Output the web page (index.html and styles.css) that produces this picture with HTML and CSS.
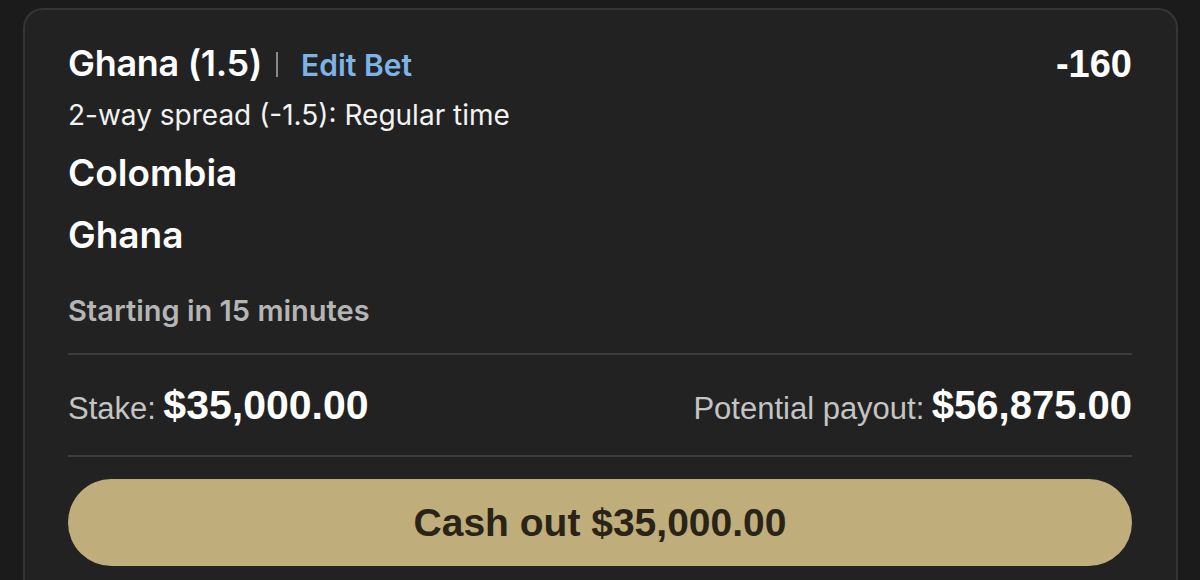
FILE: index.html
```html
<!DOCTYPE html>
<html lang="en">
  <head>
    <meta charset="UTF-8" />
    <title>Bet slip</title>
    <link rel="stylesheet" href="styles.css">
  </head>
  <body>
    <main class="card">
      <div class="bet-head">
        <div class="bet-title">
          <span class="pick">Ghana (1.5)</span>
          <span class="sep"></span>
          <a class="edit" href="#">Edit Bet</a>
        </div>
        <span class="odds">-160</span>
      </div>
      <p class="market">2-way spread (-1.5): Regular time</p>
      <p class="team">Colombia</p>
      <p class="team">Ghana</p>
      <p class="start">Starting in 15 minutes</p>
      <div class="totals">
        <p class="stake"><span class="label">Stake:</span> <span class="amount">$35,000.00</span></p>
        <p class="payout"><span class="label">Potential payout:</span> <span class="amount">$56,875.00</span></p>
      </div>
      <button type="button" class="cashout">Cash out $35,000.00</button>
    </main>
  </body>
</html>
```
FILE: styles.css
```css
* {
  margin: 0;
  padding: 0;
  box-sizing: border-box;
}

body {
  background-color: #1b1b1b;
  color: #fff;
  font-family: "Inter", "Liberation Sans", sans-serif;
  padding: 8px 22px 0 23px;
  height: 580px;
  overflow: hidden;
}

.card {
  background-color: #222;
  border: 2px solid #353535;
  border-bottom: none;
  border-radius: 20px 20px 0 0;
  padding: 31px 44px 30px 43px;
  height: 600px;
}

.bet-head {
  display: flex;
  justify-content: space-between;
  align-items: baseline;
  line-height: 44px;
}

.bet-title {
  display: flex;
  align-items: baseline;
}

.pick {
  font-size: 36px;
  font-weight: 600;
  letter-spacing: -0.3px;
}

.sep {
  align-self: center;
  width: 2px;
  height: 25px;
  background-color: #8a8a8a;
  margin: 0 23px 0 14px;
}

.edit {
  color: #7eb3e8;
  font-size: 30px;
  font-weight: 600;
  text-decoration: none;
}

.odds {
  font-family: "Liberation Sans", sans-serif;
  font-size: 38px;
  font-weight: 600;
  position: relative;
  top: 1px;
}

.market {
  font-size: 28px;
  line-height: 36px;
  margin-top: 10px;
  color: #f2f2f2;
}

.team {
  font-size: 37px;
  font-weight: 600;
  line-height: 44px;
  margin-top: 18px;
}

.start {
  font-size: 29px;
  font-weight: 600;
  line-height: 36px;
  color: #b5b5b5;
  margin-top: 36px;
  padding-bottom: 24px;
  border-bottom: 2px solid #3d3d3d;
}

.totals {
  display: flex;
  justify-content: space-between;
  align-items: baseline;
  padding: 26px 0 17px;
  border-bottom: 2px solid #3d3d3d;
  font-family: "Liberation Sans", sans-serif;
  line-height: 48px;
}

.label {
  font-size: 31px;
  line-height: 1;
  color: #c4c4c4;
  margin-right: 3px;
}

.amount {
  font-size: 40px;
  font-weight: 700;
}

.stake .amount {
  font-size: 41px;
}

.cashout {
  display: block;
  width: 100%;
  height: 87px;
  margin-top: 22px;
  border: none;
  border-radius: 44px;
  background-color: #bfad7b;
  color: #2a2417;
  font-family: "Liberation Sans", sans-serif;
  font-size: 39px;
  font-weight: 700;
  cursor: pointer;
}
```
